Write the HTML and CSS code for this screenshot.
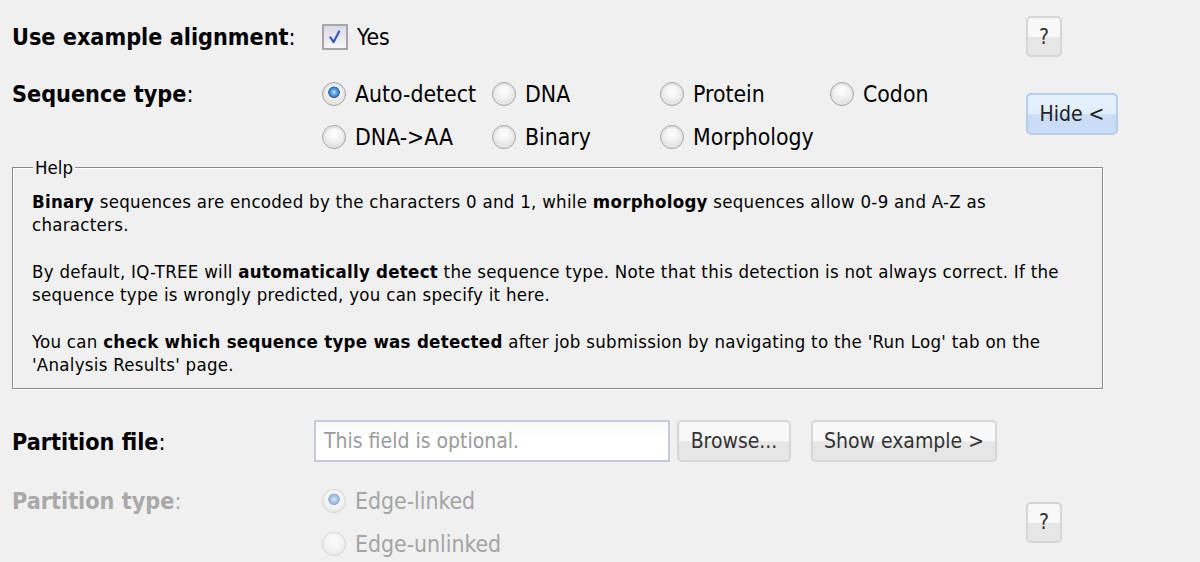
FILE: index.html
```html
<!DOCTYPE html>
<html lang="en">
<head>
<meta charset="utf-8">
<title>IQ-TREE input</title>
<link rel="stylesheet" href="styles.css">
</head>
<body>
<form class="form">
  <div class="row row-example">
    <div class="label"><b>Use example alignment</b>:</div>
    <div class="controls">
      <label class="opt">
        <span class="check"><svg viewBox="0 0 24 24" width="24" height="24"><path d="M7 12.5 L10.5 17.5 L16.5 6" fill="none" stroke="#3c55c4" stroke-width="2.4" stroke-linecap="round" stroke-linejoin="round"/></svg></span>
        Yes
      </label>
    </div>
    <div class="aside"><button type="button" class="btn btn-q">?</button></div>
  </div>

  <div class="row row-seqtype">
    <div class="label label-top"><b>Sequence type</b>:</div>
    <div class="controls radio-grid">
      <label class="opt"><input type="radio" name="st" checked>Auto-detect</label>
      <label class="opt"><input type="radio" name="st">DNA</label>
      <label class="opt"><input type="radio" name="st">Protein</label>
      <label class="opt"><input type="radio" name="st">Codon</label>
      <label class="opt"><input type="radio" name="st">DNA-&gt;AA</label>
      <label class="opt"><input type="radio" name="st">Binary</label>
      <label class="opt"><input type="radio" name="st">Morphology</label>
    </div>
    <div class="aside"><button type="button" class="btn btn-hide">Hide &lt;</button></div>
  </div>

  <fieldset class="help">
    <legend>Help</legend>
    <p><b>Binary</b> sequences are encoded by the characters 0 and 1, while <b>morphology</b> sequences allow 0-9 and A-Z as characters.</p>
    <p>By default, IQ-TREE will <b>automatically detect</b> the sequence type. Note that this detection is not always correct. If the sequence type is wrongly predicted, you can specify it here.</p>
    <p>You can <b>check which sequence type was detected</b> after job submission by navigating to the 'Run Log' tab on the 'Analysis Results' page.</p>
  </fieldset>

  <div class="row row-partfile">
    <div class="label"><b>Partition file</b>:</div>
    <div class="controls file-controls">
      <input type="text" class="text-input" placeholder="This field is optional.">
      <button type="button" class="btn btn-browse">Browse...</button>
      <button type="button" class="btn btn-example">Show example &gt;</button>
    </div>
  </div>

  <div class="row row-parttype disabled">
    <div class="label label-top"><b>Partition type</b>:</div>
    <div class="controls radio-stack">
      <label class="opt"><input type="radio" name="pt" checked disabled>Edge-linked</label>
      <label class="opt"><input type="radio" name="pt" disabled>Edge-unlinked</label>
    </div>
    <div class="aside"><button type="button" class="btn btn-q">?</button></div>
  </div>
</form>
</body>
</html>
```

FILE: styles.css
```css
html, body {
  margin: 0;
  background: #f0f0f0;
}

body {
  font-family: "DejaVu Sans Condensed", "DejaVu Sans", sans-serif;
  color: #000;
  overflow: hidden;
}

.form {
  padding: 16px 0 0 12px;
}

.row {
  display: grid;
  grid-template-columns: 302px 712px 92px;
  align-items: center;
}

.label {
  font-size: 23.2px;
  color: #000;
}

.label-top {
  align-self: start;
  line-height: 43px;
}

.controls {
  font-size: 22.8px;
}

.opt {
  display: flex;
  align-items: center;
  height: 43px;
  white-space: nowrap;
}

.opt input[type="radio"] {
  appearance: none;
  -webkit-appearance: none;
  width: 24px;
  height: 24px;
  margin: 0 9px 0 8px;
  border-radius: 50%;
  border: 1px solid #a4a4a4;
  background: radial-gradient(circle at 50% 35%, #ffffff 0%, #f0f0f0 45%, #d0d0d0 100%);
  box-shadow: inset 0 0 0 2px #e6e6e6;
  flex: none;
}

.opt input[type="radio"]:checked {
  background:
    radial-gradient(circle at 50% 42%, #bfe0fb 0px, #5aa0de 3px, #2866b0 5.5px, rgba(0,0,0,0) 6px),
    radial-gradient(circle at 50% 35%, #ffffff 0%, #f0f0f0 45%, #d0d0d0 100%);
}

.check {
  display: inline-flex;
  width: 22px;
  height: 22px;
  margin: 0 9px 0 8px;
  border: 2px solid #a6a6a6;
  background: linear-gradient(#d8dae6, #f6f6fa);
  align-items: center;
  justify-content: center;
}

.check svg {
  width: 22px;
  height: 22px;
}

.row-example {
  height: 40px;
}

.row-example .opt {
  height: 40px;
}

.aside {
  display: flex;
}

.btn {
  font-family: "DejaVu Sans Condensed", "DejaVu Sans", sans-serif;
  font-size: 21px;
  color: #333;
  border: 2px solid #d6d6d6;
  border-radius: 5px;
  background: linear-gradient(#f8f8f8 0%, #f8f8f8 50%, #e6e6e6 52%, #e6e6e6 100%);
  padding: 0;
  cursor: pointer;
}

.btn-q {
  width: 36px;
  height: 41px;
}

.row-seqtype {
  margin-top: 16px;
}

.radio-grid {
  display: grid;
  grid-template-columns: 170px 168px 170px 170px;
}

.btn-hide {
  width: 92px;
  height: 42px;
  margin-top: -3px;
  color: #222;
  border-color: #b6cdef;
  background: linear-gradient(#e6f1fe 0%, #e0edfc 50%, #cadcf6 52%, #cadcf6 100%);
}

.help {
  margin: -1px 0 0 0;
  width: 1046px;
  padding: 12px 24px 12px 19px;
  border: 1px solid #8a8a8a;
  box-shadow: inset 1px 1px 0 #fff, 1px 1px 0 #fff;
  font-size: 18.5px;
  letter-spacing: 0.28px;
  line-height: 23px;
}

.help legend {
  padding: 0 2px;
  margin-left: 1px;
  background: #f0f0f0;
  line-height: 21px;
  letter-spacing: 0;
}

.help p {
  margin: 0 0 24px;
}

.help p:last-child {
  margin-bottom: 0;
}

.row-partfile {
  margin-top: 31px;
}

.file-controls {
  display: flex;
  align-items: center;
}

.text-input {
  box-sizing: border-box;
  width: 356px;
  height: 42px;
  border: 2px solid #c6c9db;
  background: linear-gradient(#f7f7f7, #ffffff 40%);
  font-family: "DejaVu Sans Condensed", "DejaVu Sans", sans-serif;
  font-size: 21px;
  padding: 0 8px;
  margin: 0;
}

.text-input::placeholder {
  color: #9a9a9a;
}

.btn-browse {
  width: 114px;
  height: 42px;
  margin-left: 7px;
}

.btn-example {
  width: 186px;
  height: 42px;
  margin-left: 20px;
}

.row-parttype {
  margin-top: 17px;
}

.disabled .label {
  color: #a9a9a9;
}

.disabled .opt {
  color: #a4a4a4;
}

.disabled .opt input[type="radio"] {
  border-color: #d4d4d4;
  background: radial-gradient(circle at 50% 35%, #fbfbfb 0%, #f3f3f3 50%, #e4e4e4 100%);
  box-shadow: none;
}

.disabled .opt input[type="radio"]:checked {
  background:
    radial-gradient(circle at 50% 42%, #dcebf8 0px, #a8c6e4 3px, #8fb1d6 5.5px, rgba(0,0,0,0) 6px),
    radial-gradient(circle at 50% 35%, #fbfbfb 0%, #f3f3f3 50%, #e4e4e4 100%);
}
```
